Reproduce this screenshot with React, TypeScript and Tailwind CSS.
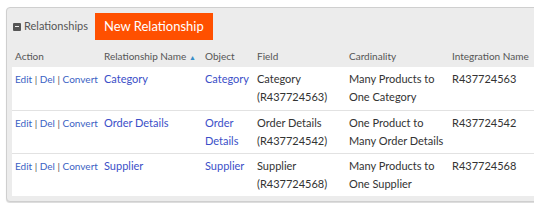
import React from "react";

type Row = {
  name: string;
  object: string;
  field: string;
  fieldId: string;
  cardinality: string;
  integration: string;
};

const rows: Row[] = [
  {
    name: "Category",
    object: "Category",
    field: "Category",
    fieldId: "R437724563",
    cardinality: "Many Products to One Category",
    integration: "R437724563",
  },
  {
    name: "Order Details",
    object: "Order Details",
    field: "Order Details",
    fieldId: "R437724542",
    cardinality: "One Product to Many Order Details",
    integration: "R437724542",
  },
  {
    name: "Supplier",
    object: "Supplier",
    field: "Supplier",
    fieldId: "R437724568",
    cardinality: "Many Products to One Supplier",
    integration: "R437724568",
  },
];

export default function App() {
  return (
    <div
      className="w-[534px] h-[203px] overflow-hidden bg-white pt-[7px] pl-[6px]"
      style={{ fontFamily: "Lato, 'Open Sans', sans-serif" }}
    >
      <div className="w-[570px] rounded-[4px] border border-[#cfcfcf] bg-[#ececec] pb-[5px] pl-[5px] shadow-[0_1px_1px_rgba(0,0,0,0.15)]">
        <div className="flex h-[37px] items-center">
          <span className="relative ml-[1px] inline-block h-[8px] w-[8px] rounded-[1px] bg-[#555]">
            <span className="absolute left-[2px] top-[3.5px] h-[1px] w-[4px] bg-[#ececec]" />
          </span>
          <span className="ml-[3px] text-[11px] text-[#555]">Relationships</span>
          <button
            type="button"
            className="ml-[7px] h-[27px] bg-[#ff5000] px-[9px] text-[13px] text-white"
          >
            New Relationship
          </button>
        </div>
        <table className="table-fixed border-collapse text-left">
          <colgroup>
            <col className="w-[89px]" />
            <col className="w-[101px]" />
            <col className="w-[52px]" />
            <col className="w-[92px]" />
            <col className="w-[103px]" />
            <col className="w-[120px]" />
          </colgroup>
          <thead>
            <tr className="h-[22px] whitespace-nowrap text-[10px] text-[#555]">
              <th className="px-[3px] font-normal">Action</th>
              <th className="px-[3px] font-normal">
                Relationship Name <span className="text-[7px] text-[#3a8dc8]">▲</span>
              </th>
              <th className="px-[3px] font-normal">Object</th>
              <th className="px-[3px] font-normal">Field</th>
              <th className="px-[3px] font-normal">Cardinality</th>
              <th className="px-[3px] font-normal">Integration Name</th>
            </tr>
          </thead>
          <tbody className="bg-white text-[11px] leading-[18px]">
            {rows.map((r, i) => (
              <tr
                key={r.name}
                className={i < rows.length - 1 ? "h-[43px] border-b border-[#e2e2e2] align-top" : "h-[43px] align-top"}
              >
                <td className="whitespace-nowrap px-[3px] pt-[3px] text-[10px] text-[#3b5fc4]">
                  Edit <span className="text-[#555]">|</span> Del{" "}
                  <span className="text-[#555]">|</span> Convert
                </td>
                <td className="px-[3px] pt-[3px] text-[#3b4fc8]">{r.name}</td>
                <td className="px-[3px] pt-[3px] text-[#3b4fc8]">{r.object}</td>
                <td className="px-[3px] pt-[3px] text-[#333]">
                  {r.field}
                  <br />({r.fieldId})
                </td>
                <td className="px-[3px] pt-[3px] text-[#333]">{r.cardinality}</td>
                <td className="px-[3px] pt-[3px] text-[#333]">{r.integration}</td>
              </tr>
            ))}
          </tbody>
        </table>
      </div>
    </div>
  );
}
